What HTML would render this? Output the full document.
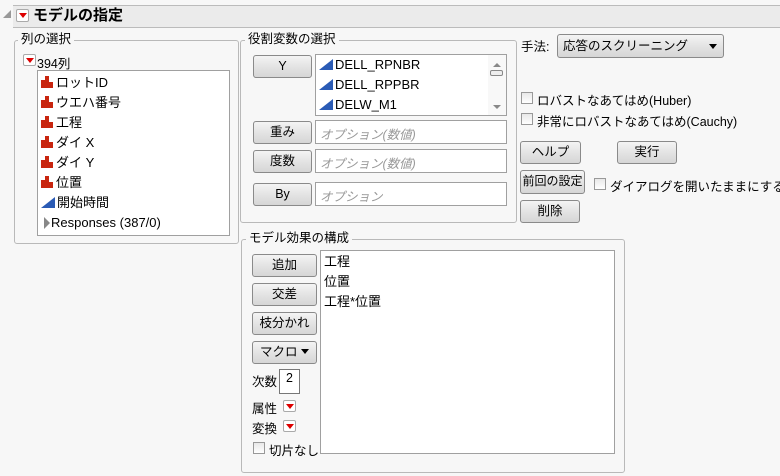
<!DOCTYPE html>
<html><head><meta charset="utf-8"><style>
*{box-sizing:border-box;margin:0;padding:0}
body{width:780px;height:476px;background:#f7f7f7;font-family:"Liberation Sans","Noto Sans CJK JP",sans-serif;font-size:12.5px;color:#000;position:relative;overflow:hidden}
.a{position:absolute;white-space:nowrap}
.fs{position:absolute;border:1px solid #b9b9b9;border-radius:3px;background:#f7f7f7}
.lg{position:absolute;background:#f7f7f7;padding:0 3px;font-size:12.5px;line-height:14px}
.box{position:absolute;background:#fff;border:1px solid #a0a0a0}
.btn{position:absolute;border:1px solid #8a8a8a;border-radius:3px;background:linear-gradient(#f4f4f4,#e2e2e2 55%,#d6d6d6);text-align:center;font-size:12.5px;line-height:20px}
.rb{position:absolute;width:13px;height:12px;border:1px solid #aaa;border-radius:2px;background:#fff}
.rb:after{content:"";position:absolute;left:2px;top:3px;border-left:4px solid transparent;border-right:4px solid transparent;border-top:5px solid #d00}
.cb{position:absolute;width:12px;height:12px;border:1px solid #999;background:linear-gradient(#e8e8e8,#fff)}
.it{position:absolute;left:3px;font-size:13px;line-height:14px;white-space:nowrap}
.bar{display:inline-block;vertical-align:-1px;width:14px;height:12px;margin-right:1px;position:relative}
.bar i{position:absolute;bottom:0;width:4px;background:#c8250f}
.tri{display:inline-block;width:0;height:0;border-left:14px solid transparent;border-bottom:11px solid #2a5bb5;margin-right:2px;vertical-align:-1px}
.ph{position:absolute;left:4px;top:4px;color:#999;font-style:italic}
</style></head><body>
<div class="a" style="left:3px;top:10px;width:0;height:0;border-left:8px solid transparent;border-bottom:8px solid #999"></div>
<div class="a" style="left:13px;top:5px;width:767px;height:23px;background:#ebebeb;border-top:1px solid #bbb;border-bottom:1px solid #bbb"></div>
<div class="rb" style="left:16px;top:9px;height:13px"></div>
<div class="a" style="left:33px;top:6px;font-size:15px;font-weight:bold;line-height:20px">モデルの指定</div>

<div class="fs" style="left:14px;top:40px;width:225px;height:204px"></div>
<div class="lg" style="left:18px;top:32px">列の選択</div>
<div class="rb" style="left:23px;top:54px"></div>
<div class="a" style="left:37px;top:53px">394列</div>
<div class="box" style="left:37px;top:70px;width:193px;height:166px">
<div class="it" style="top:5px"><span class="bar"><i style="left:0;height:8px"></i><i style="left:4px;height:12px"></i><i style="left:8px;height:6px"></i></span>ロットID</div>
<div class="it" style="top:25px"><span class="bar"><i style="left:0;height:8px"></i><i style="left:4px;height:12px"></i><i style="left:8px;height:6px"></i></span>ウエハ番号</div>
<div class="it" style="top:45px"><span class="bar"><i style="left:0;height:8px"></i><i style="left:4px;height:12px"></i><i style="left:8px;height:6px"></i></span>工程</div>
<div class="it" style="top:65px"><span class="bar"><i style="left:0;height:8px"></i><i style="left:4px;height:12px"></i><i style="left:8px;height:6px"></i></span>ダイ X</div>
<div class="it" style="top:85px"><span class="bar"><i style="left:0;height:8px"></i><i style="left:4px;height:12px"></i><i style="left:8px;height:6px"></i></span>ダイ Y</div>
<div class="it" style="top:105px"><span class="bar"><i style="left:0;height:8px"></i><i style="left:4px;height:12px"></i><i style="left:8px;height:6px"></i></span>位置</div>
<div class="it" style="top:125px"><span class="tri"></span>開始時間</div>
<div class="it" style="top:145px;left:6px"><span style="display:inline-block;width:0;height:0;border-top:6px solid transparent;border-bottom:6px solid transparent;border-left:6px solid #888;vertical-align:-2px;margin-right:1px"></span>Responses (387/0)</div>
</div>

<div class="fs" style="left:240px;top:40px;width:277px;height:183px"></div>
<div class="lg" style="left:245px;top:32px">役割変数の選択</div>
<div class="btn" style="left:253px;top:55px;width:59px;height:23px">Y</div>
<div class="box" style="left:315px;top:54px;width:192px;height:62px">
<div class="it" style="top:3px"><span class="tri"></span>DELL_RPNBR</div>
<div class="it" style="top:23px"><span class="tri"></span>DELL_RPPBR</div>
<div class="it" style="top:43px"><span class="tri"></span>DELW_M1</div>
<div class="a" style="left:172px;top:0;width:18px;height:60px;background:#f8f8f8"></div>
<div class="a" style="left:177px;top:8px;border-left:4px solid transparent;border-right:4px solid transparent;border-bottom:4px solid #888"></div>
<div class="a" style="left:174px;top:15px;width:13px;height:6px;border:1px solid #888;border-radius:2px;background:#eee"></div>
<div class="a" style="left:177px;top:50px;border-left:4px solid transparent;border-right:4px solid transparent;border-top:4px solid #888"></div>
</div>
<div class="btn" style="left:253px;top:121px;width:59px;height:23px">重み</div>
<div class="box" style="left:315px;top:120px;width:192px;height:24px"><span class="ph" style="top:3px">オプション(数値)</span></div>
<div class="btn" style="left:253px;top:150px;width:59px;height:23px">度数</div>
<div class="box" style="left:315px;top:149px;width:192px;height:24px"><span class="ph" style="top:3px">オプション(数値)</span></div>
<div class="btn" style="left:253px;top:183px;width:59px;height:23px">By</div>
<div class="box" style="left:315px;top:182px;width:192px;height:24px"><span class="ph" style="top:3px">オプション</span></div>

<div class="fs" style="left:241px;top:239px;width:384px;height:234px"></div>
<div class="lg" style="left:246px;top:231px">モデル効果の構成</div>
<div class="btn" style="left:252px;top:254px;width:65px;height:23px">追加</div>
<div class="btn" style="left:252px;top:283px;width:65px;height:23px">交差</div>
<div class="btn" style="left:252px;top:312px;width:65px;height:23px">枝分かれ</div>
<div class="btn" style="left:252px;top:341px;width:65px;height:23px">マクロ <span style="display:inline-block;border-left:4px solid transparent;border-right:4px solid transparent;border-top:5px solid #000;vertical-align:2px"></span></div>
<div class="a" style="left:252px;top:371px">次数</div>
<div class="box" style="left:279px;top:369px;width:21px;height:25px;border-color:#777"><span style="position:absolute;left:6px;top:1px">2</span></div>
<div class="a" style="left:252px;top:398px">属性</div>
<div class="rb" style="left:283px;top:400px"></div>
<div class="a" style="left:252px;top:418px">変換</div>
<div class="rb" style="left:283px;top:420px"></div>
<div class="cb" style="left:253px;top:442px"></div>
<div class="a" style="left:269px;top:440px">切片なし</div>
<div class="box" style="left:320px;top:250px;width:295px;height:204px">
<div class="it" style="top:4px">工程</div>
<div class="it" style="top:24px">位置</div>
<div class="it" style="top:44px">工程*位置</div>
</div>

<div class="a" style="left:521px;top:36px">手法:</div>
<div class="btn" style="left:557px;top:34px;width:167px;height:24px;text-align:left;padding-left:5px;line-height:22px">応答のスクリーニング<span class="a" style="right:6px;top:9px;border-left:4px solid transparent;border-right:4px solid transparent;border-top:5px solid #000"></span></div>
<div class="cb" style="left:521px;top:92px"></div>
<div class="a" style="left:537px;top:90px">ロバストなあてはめ(Huber)</div>
<div class="cb" style="left:521px;top:113px"></div>
<div class="a" style="left:537px;top:111px">非常にロバストなあてはめ(Cauchy)</div>
<div class="btn" style="left:520px;top:141px;width:61px;height:23px">ヘルプ</div>
<div class="btn" style="left:617px;top:141px;width:60px;height:23px">実行</div>
<div class="btn" style="left:520px;top:170px;width:65px;height:24px;font-size:12px">前回の設定</div>
<div class="cb" style="left:594px;top:178px"></div>
<div class="a" style="left:610px;top:176px">ダイアログを開いたままにする</div>
<div class="btn" style="left:520px;top:200px;width:60px;height:23px">削除</div>
</body></html>
